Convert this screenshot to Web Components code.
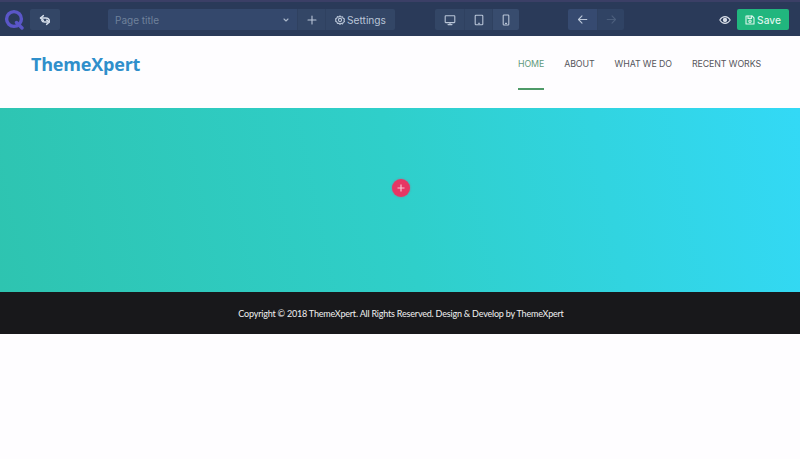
<!DOCTYPE html>
<html>
<head>
<meta charset="utf-8">
<title>Page builder</title>
<style>
  html, body { margin: 0; padding: 0; background: #fefdff; }
  body { width: 800px; height: 459px; overflow: hidden; font-family: "Open Sans", sans-serif; }
</style>
</head>
<body>
<builder-page>
  <builder-toolbar></builder-toolbar>
  <site-header></site-header>
  <hero-section></hero-section>
  <site-footer>Copyright © 2018 ThemeXpert. All Rights Reserved. Design &amp; Develop by ThemeXpert</site-footer>
</builder-page>

<script>
const page_template = document.createElement("template");
page_template.innerHTML = `
  <style>
    :host { display: flex; flex-direction: column; width: 800px; height: 459px; }
  </style>
  <slot></slot>
`;

class BuilderPage extends HTMLElement {
  constructor() {
    super();
    this.attachShadow({ mode: 'open' }).append(page_template.content.cloneNode(true));
  }
}

const toolbar_template = document.createElement("template");
toolbar_template.innerHTML = `
  <style>
    :host {
      display: flex;
      align-items: center;
      box-sizing: border-box;
      height: 36px;
      padding: 1px 11px 0 4px;
      background: #2a3a59;
      border-top: 2px solid #3b3f66;
      font-family: Inter, "Open Sans", sans-serif;
      font-size: 10px;
      color: #b9c5d7;
    }
    .logo { width: 21px; height: 21px; margin-right: 5px; flex: none; }
    .group { display: flex; height: 21px; border-radius: 2px; overflow: hidden; flex: none; }
    .btn {
      display: flex;
      align-items: center;
      justify-content: center;
      gap: 2px;
      box-sizing: border-box;
      height: 21px;
      background: #334666;
      flex: none;
    }
    .btn + .btn { border-left: 1px solid #2f4160; }
    .back { width: 30px; margin-right: 48px; }
    .title {
      width: 189px;
      justify-content: space-between;
      padding: 0 7px;
      color: #6f819b;
      background: #34486c;
    }
    .plus { width: 28px; }
    .settings { width: 70px; font-size: 10.2px; }
    .devices { margin-left: 40px; }
    .history { margin-left: 49px; }
    .eye { margin-left: auto; margin-right: 6px; width: 12px; height: 12px; flex: none; }
    .save {
      display: flex;
      align-items: center;
      justify-content: center;
      gap: 2px;
      width: 52px;
      height: 21px;
      border-radius: 2px;
      background: #21b67e;
      color: #dff5ec;
      font-size: 10.2px;
      font-weight: 500;
      flex: none;
    }
    svg { display: block; fill: none; stroke: currentColor; stroke-width: 1.1; stroke-linecap: round; stroke-linejoin: round; }
  </style>
  <svg class="logo" viewBox="0 0 21 21" style="stroke:#5a56c8;stroke-width:3.4">
    <circle cx="10" cy="10" r="7.4"/>
    <path d="M12.5 13.5l5.5 5.5"/>
  </svg>
  <div class="btn back group">
    <svg width="12" height="12" viewBox="0 0 12 12" style="color:#d5deea;stroke-width:1.4">
      <path d="M4.4 1.6L1.4 4l3 2.4"/>
      <path d="M1.8 4h5c2.2 0 3.6 1.3 3.6 3.2"/>
      <path d="M7.6 10.4l2.8-2.4-2.8-1.8"/>
      <path d="M10 8H5.5C4 8 3.2 7.4 2.8 6.4"/>
    </svg>
  </div>
  <div class="group">
    <div class="btn title">
      <span>Page title</span>
      <svg width="8" height="8" viewBox="0 0 8 8" style="color:#a9b6c9"><path d="M2 3l2 2 2-2"/></svg>
    </div>
    <div class="btn plus">
      <svg width="10" height="10" viewBox="0 0 10 10"><path d="M5 1v8M1 5h8"/></svg>
    </div>
    <div class="btn settings">
      <svg width="10" height="10" viewBox="0 0 10 10" stroke-width="1">
        <path d="M5 .8l1 1.2 1.6-.2.5 1.5 1.4.7L9 5.3l.5 1.3-1.4.8-.5 1.5L6 8.2 5 9.3 4 8.2l-1.6.2-.5-1.5L.5 6.1 1 5 .5 3.9l1.4-.8.5-1.5L4 2z"/>
        <circle cx="5" cy="5" r="1.6"/>
      </svg>
      <span>Settings</span>
    </div>
  </div>
  <div class="group devices">
    <div class="btn" style="width:29px">
      <svg width="12" height="12" viewBox="0 0 12 12"><rect x="1.2" y="1.8" width="9.6" height="6.8" rx=".6"/><path d="M4 10.6h4M6 8.6v2"/></svg>
    </div>
    <div class="btn" style="width:28px">
      <svg width="12" height="12" viewBox="0 0 12 12"><rect x="2.2" y="1.2" width="7.6" height="9.6" rx=".8"/><path d="M5.4 9.2h1.2"/></svg>
    </div>
    <div class="btn" style="width:27px;background:#384c6e">
      <svg width="12" height="12" viewBox="0 0 12 12"><rect x="3.2" y="1" width="5.6" height="10" rx=".8"/><path d="M5.5 9.4h1"/></svg>
    </div>
  </div>
  <div class="group history">
    <div class="btn" style="width:29px;background:#364a70">
      <svg width="11" height="11" viewBox="0 0 11 11"><path d="M5 1.8L1.5 5.5 5 9.2M1.8 5.5h8"/></svg>
    </div>
    <div class="btn" style="width:27px;color:#4b5e7c;background:#304364">
      <svg width="11" height="11" viewBox="0 0 11 11"><path d="M6 1.8l3.5 3.7L6 9.2M9.2 5.5h-8"/></svg>
    </div>
  </div>
  <svg class="eye" viewBox="0 0 12 12" style="color:#d5dbe5">
    <path d="M.8 6C2.2 3.6 4 2.6 6 2.6S9.8 3.6 11.2 6C9.8 8.4 8 9.4 6 9.4S2.2 8.4.8 6z"/>
    <circle cx="6" cy="6" r="1.6" fill="currentColor"/>
  </svg>
  <div class="save">
    <svg width="10" height="10" viewBox="0 0 10 10" stroke-width="1">
      <path d="M1 1h6.2L9 2.8V9H1z"/><path d="M3 1v2.4h3.4V1"/><circle cx="5" cy="6.2" r="1.2"/>
    </svg>
    <span>Save</span>
  </div>
`;

class BuilderToolbar extends HTMLElement {
  constructor() {
    super();
    this.attachShadow({ mode: 'open' }).append(toolbar_template.content.cloneNode(true));
  }
}

const header_template = document.createElement("template");
header_template.innerHTML = `
  <style>
    :host {
      display: flex;
      justify-content: space-between;
      box-sizing: border-box;
      height: 72px;
      padding: 0 39px 0 31px;
      background: #fefdff;
    }
    .brand {
      align-self: flex-start;
      margin-top: 14px;
      font: 700 18px/28px "Open Sans", sans-serif;
      letter-spacing: -.2px;
      color: #2f8fcb;
    }
    nav { display: flex; gap: 20px; font: 400 8.8px/15px Inter, sans-serif; letter-spacing: -.08px; color: #55555b; }
    a {
      box-sizing: border-box;
      height: 54px;
      padding-top: 20px;
    }
    a.active { color: #5f9a7c; border-bottom: 2px solid #4e9a68; }
  </style>
  <div class="brand">ThemeXpert</div>
  <nav>
    <a class="active">HOME</a>
    <a>ABOUT</a>
    <a>WHAT WE DO</a>
    <a>RECENT WORKS</a>
  </nav>
`;

class SiteHeader extends HTMLElement {
  constructor() {
    super();
    this.attachShadow({ mode: 'open' }).append(header_template.content.cloneNode(true));
  }
}

const hero_template = document.createElement("template");
hero_template.innerHTML = `
  <style>
    :host {
      display: flex;
      align-items: center;
      justify-content: center;
      height: 184px;
      background: linear-gradient(78deg, #2ec4b0 0%, #2fcfca 50%, #33d9f6 100%);
    }
    .add {
      display: flex;
      align-items: center;
      justify-content: center;
      width: 18px;
      height: 18px;
      margin: 0 0 25px 2px;
      border-radius: 50%;
      background: #e63764;
      box-shadow: 0 0 2px rgba(230,55,100,.6);
    }
    svg { display: block; stroke: #f9c4d3; stroke-width: 1.2; }
  </style>
  <div class="add"><svg width="8" height="8" viewBox="0 0 8 8"><path d="M4 .5v7M.5 4h7"/></svg></div>
`;

class HeroSection extends HTMLElement {
  constructor() {
    super();
    this.attachShadow({ mode: 'open' }).append(hero_template.content.cloneNode(true));
  }
}

const footer_template = document.createElement("template");
footer_template.innerHTML = `
  <style>
    :host {
      display: flex;
      align-items: center;
      justify-content: center;
      height: 42px;
      padding: 2px 0 0 2px;
      box-sizing: border-box;
      background: #18181b;
      color: #f1f1f1;
      font: 400 9px/14px Lato, "Open Sans", sans-serif;
      letter-spacing: -.2px;
    }
  </style>
  <slot></slot>
`;

class SiteFooter extends HTMLElement {
  constructor() {
    super();
    this.attachShadow({ mode: 'open' }).append(footer_template.content.cloneNode(true));
  }
}

customElements.define("builder-page", BuilderPage);
customElements.define("builder-toolbar", BuilderToolbar);
customElements.define("site-header", SiteHeader);
customElements.define("hero-section", HeroSection);
customElements.define("site-footer", SiteFooter);
</script>
</body>
</html>
